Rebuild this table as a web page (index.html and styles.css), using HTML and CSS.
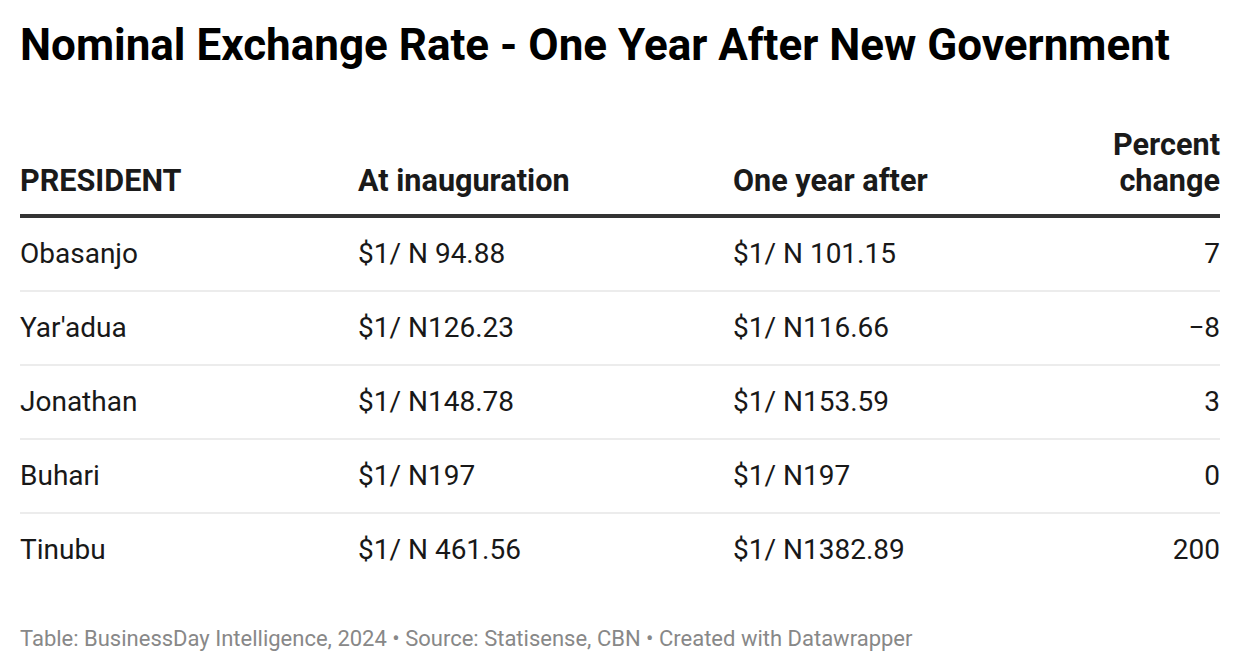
FILE: index.html
```html
<!DOCTYPE html>
<html lang="en">
<head>
<meta charset="utf-8">
<title>Nominal Exchange Rate</title>
<link rel="stylesheet" href="styles.css">
</head>
<body>
<div class="chart">
  <h1 class="title">Nominal Exchange Rate - One Year After New Government</h1>
  <table class="data">
    <thead>
      <tr>
        <th class="c1">PRESIDENT</th>
        <th class="c2">At inauguration</th>
        <th class="c3">One year after</th>
        <th class="c4">Percent<br>change</th>
      </tr>
    </thead>
    <tbody>
      <tr><td>Obasanjo</td><td>$1/ N 94.88</td><td>$1/ N 101.15</td><td class="num">7</td></tr>
      <tr><td>Yar'adua</td><td>$1/ N126.23</td><td>$1/ N116.66</td><td class="num">−8</td></tr>
      <tr><td>Jonathan</td><td>$1/ N148.78</td><td>$1/ N153.59</td><td class="num">3</td></tr>
      <tr><td>Buhari</td><td>$1/ N197</td><td>$1/ N197</td><td class="num">0</td></tr>
      <tr><td>Tinubu</td><td>$1/ N 461.56</td><td>$1/ N1382.89</td><td class="num">200</td></tr>
    </tbody>
  </table>
  <p class="footer">Table: BusinessDay Intelligence, 2024 • Source: <span class="src">Statisense, CBN</span> • Created with Datawrapper</p>
</div>
</body>
</html>
```

FILE: styles.css
```css
html, body {
  margin: 0;
  padding: 0;
  background: #ffffff;
}
body {
  font-family: Roboto, "Liberation Sans", Arial, sans-serif;
  color: #181818;
}
.chart {
  padding: 19px 20px 0 20px;
}
.title {
  margin: 0;
  font-size: 44px;
  line-height: 1.2;
  font-weight: 700;
  color: #000;
}
.data {
  width: 100%;
  margin-top: 55px;
  border-collapse: collapse;
  font-size: 28px;
}
.data th {
  font-weight: 700;
  font-size: 30.6px;
  line-height: 36px;
  text-align: left;
  vertical-align: bottom;
  padding: 0 0 15px 0;
  border-bottom: 4px solid #333333;
  color: #1a1a1a;
}
.data th.c4 { text-align: right; }
.data .c1 { width: 338px; }
.data .c2 { width: 375px; }
.data td {
  height: 72px;
  padding: 0;
  line-height: 32px;
  border-bottom: 2px solid #ececec;
  vertical-align: middle;
}
.data tbody tr:last-child td { border-bottom: none; }
.data td.num { text-align: right; }
.footer {
  margin: 40px 0 0 0;
  font-size: 22px;
  line-height: 26px;
  color: #888888;
}
```
